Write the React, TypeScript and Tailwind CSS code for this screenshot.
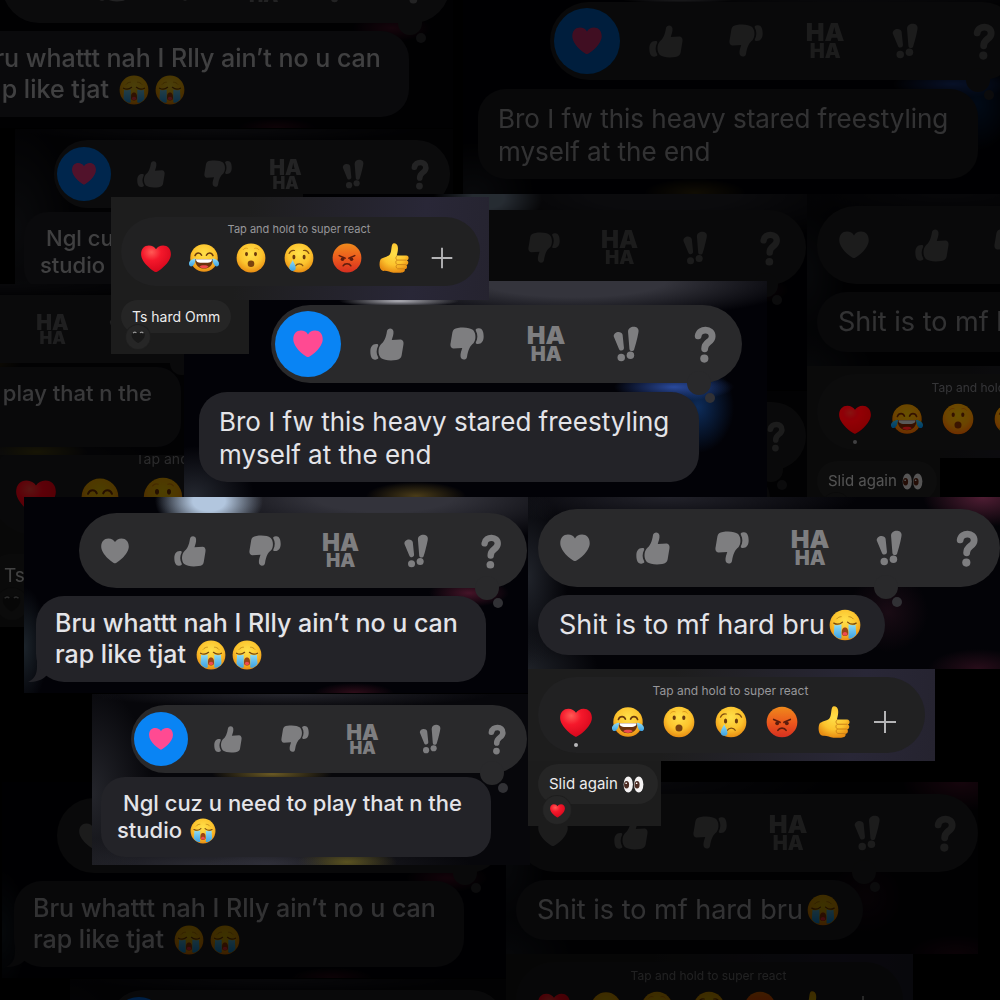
import React from 'react';

type Size = 'sm' | 'md' | 'lg';

const TAPBACK_SIZES: Record<Size, { slot: string; ring: string; ha: string; haSmall: string }> = {
  sm: { slot: 'size-7', ring: '-inset-[13px]', ha: 'text-[21px] leading-[17px]', haSmall: 'text-[17px] leading-[14px]' },
  md: { slot: 'size-8', ring: '-inset-4', ha: 'text-[24px] leading-[20px]', haSmall: 'text-[19px] leading-[16px]' },
  lg: { slot: 'size-[34px]', ring: '-inset-4', ha: 'text-[25px] leading-[21px]', haSmall: 'text-[20px] leading-[17px]' },
};

const HEART = 'M50 91C44 91 4 62 4 35C4 18 14 8 28 8C38 8 46 13 50 20C54 13 62 8 72 8C86 8 96 18 96 35C96 62 56 91 50 91Z';

function Thumb({ down = false }: { down?: boolean }) {
  return (
    <svg viewBox="0 0 100 100" fill="currentColor" className="size-full">
      <g transform={down ? 'rotate(180 50 50)' : undefined}>
        <path d="M31 52C41 45 47 32 50 12C52 1 68 2 69 13C70 22 66 31 64 38L90 37C98 38 100 46 98 54L93 84C92 92 86 96 77 97C57 100 41 97 32 91C23 81 23 62 31 52Z" />
        <path d="M20 50C7 49 1 59 1 72C1 87 6 97 16 96C23 95 26 93 24 89C18 79 18 66 24 55C25 52 23 50 20 50Z" />
      </g>
    </svg>
  );
}

function Exclaim() {
  return (
    <svg viewBox="0 0 100 100" fill="currentColor" className="size-full overflow-visible">
      <path d="M14 28C12 13 37 9 40 23L44 62C44 71 31 72 29 64Z" />
      <path d="M56 14C56 -5 88 -5 87 12C87 20 76 62 74 66C72 73 60 72 60 64Z" />
      <circle cx="36" cy="90" r="11" />
      <circle cx="63" cy="83" r="11" />
    </svg>
  );
}

function Question() {
  return (
    <svg viewBox="0 0 100 100" fill="none" className="size-full overflow-visible">
      <path d="M30 26C33 3 72 3 71 28C70 46 49 43 49 64" stroke="currentColor" strokeWidth="20" strokeLinecap="round" />
      <circle cx="48" cy="93" r="12" fill="currentColor" />
    </svg>
  );
}

function Heart() {
  return (
    <svg viewBox="0 0 100 100" fill="currentColor" className="size-full">
      <path d={HEART} />
    </svg>
  );
}

// shared gradients for every emoji on the page
function EmojiDefs() {
  return (
    <svg className="absolute size-0" aria-hidden="true">
      <defs>
        <radialGradient id="face" cx="50%" cy="35%" r="65%">
          <stop offset="0" stopColor="#ffe04a" />
          <stop offset="0.6" stopColor="#fcc32d" />
          <stop offset="1" stopColor="#e88d13" />
        </radialGradient>
        <linearGradient id="rage" x1="0" y1="0" x2="0" y2="1">
          <stop offset="0" stopColor="#ef8a1c" />
          <stop offset="0.5" stopColor="#ec5a1d" />
          <stop offset="1" stopColor="#d62f20" />
        </linearGradient>
        <radialGradient id="redheart" cx="35%" cy="25%" r="80%">
          <stop offset="0" stopColor="#ff5a55" />
          <stop offset="0.4" stopColor="#f5182b" />
          <stop offset="1" stopColor="#d3061b" />
        </radialGradient>
        <linearGradient id="tear" x1="0" y1="0" x2="0" y2="1">
          <stop offset="0" stopColor="#8fdcf7" />
          <stop offset="1" stopColor="#3da2e2" />
        </linearGradient>
      </defs>
    </svg>
  );
}

type EmojiName = 'love' | 'joy' | 'wow' | 'cry' | 'angry' | 'like' | 'sob' | 'eyes';

const DRAWINGS: Record<EmojiName, React.ReactNode> = {
  love: <path d={HEART} fill="url(#redheart)" transform="translate(-4 0) scale(1.08 1.06)" />,
  joy: (
    <>
      <circle cx="50" cy="50" r="46" fill="url(#face)" />
      <path d="M20 42C25 30 38 31 42 41M58 41C62 31 75 30 80 42" fill="none" stroke="#6b3a0d" strokeWidth="5" strokeLinecap="round" />
      <path d="M20 53H80C79 75 67 85 50 85S21 75 20 53Z" fill="#6a330f" />
      <path d="M23 54H77C76 64 70 66 50 66S24 64 23 54Z" fill="#fff" />
      <path d="M35 79C40 73 60 73 65 79C56 86 44 86 35 79Z" fill="#ee4a4c" />
      <path d="M22 52C18 52 -2 57 0 71C2 83 20 82 22 52ZM78 52C82 52 102 57 100 71C98 83 80 82 78 52Z" fill="url(#tear)" />
    </>
  ),
  wow: (
    <>
      <circle cx="50" cy="50" r="48" fill="url(#face)" />
      <ellipse cx="35" cy="37" rx="5" ry="7" fill="#6b3a0d" />
      <ellipse cx="65" cy="37" rx="5" ry="7" fill="#6b3a0d" />
      <path d="M24 22C28 17 33 16 38 18M62 18C67 16 72 17 76 22" fill="none" stroke="#dc9a1c" strokeWidth="3" strokeLinecap="round" />
      <ellipse cx="50" cy="69" rx="11" ry="11" fill="#7a430f" />
    </>
  ),
  cry: (
    <>
      <circle cx="50" cy="50" r="48" fill="url(#face)" />
      <ellipse cx="33" cy="47" rx="5" ry="8" fill="#6b3a0d" />
      <ellipse cx="67" cy="47" rx="5" ry="8" fill="#6b3a0d" />
      <path d="M17 35C20 28 27 23 35 25M65 25C73 23 80 28 83 35M39 76C43 67 59 67 63 76" fill="none" stroke="#84500f" strokeWidth="4" strokeLinecap="round" />
      <path d="M29 57C26 65 16 75 18 85C21 96 37 96 39 85C40 75 32 66 29 57Z" fill="url(#tear)" />
    </>
  ),
  angry: (
    <>
      <circle cx="50" cy="50" r="48" fill="url(#rage)" />
      <path d="M24 42L44 51M76 42L56 51M37 76C42 67 58 67 63 76" fill="none" stroke="#5d1c0d" strokeWidth="5" strokeLinecap="round" />
      <circle cx="35" cy="54" r="6" fill="#5d1c0d" />
      <circle cx="65" cy="54" r="6" fill="#5d1c0d" />
    </>
  ),
  like: (
    <>
      <path d="M5 55C10 47 29 47 36 38C44 28 39 2 49 1C64 0 67 18 59 42H91C102 43 100 57 93 58C101 61 98 73 91 73C96 77 93 88 86 87C88 95 82 99 72 99H48C36 98 28 92 16 93C1 94 -1 67 5 55Z" fill="url(#face)" />
      <path d="M61 57H92M61 72H90M62 86H85M61 43C54 46 56 55 61 57C54 60 55 69 61 72C55 75 56 83 62 86" fill="none" stroke="#cb8118" strokeWidth="3" />
    </>
  ),
  sob: (
    <>
      <circle cx="50" cy="50" r="48" fill="url(#face)" />
      <path d="M15 44C24 49 34 48 42 41M58 41C66 48 76 49 85 44" fill="none" stroke="#77470f" strokeWidth="4" strokeLinecap="round" />
      <path d="M24 31C28 26 33 24 38 24M76 31C72 26 67 24 62 24" fill="none" stroke="#c08a1a" strokeWidth="3" strokeLinecap="round" />
      <path d="M17 49C26 52 33 51 39 48V92C30 94 19 87 15 79ZM61 48C67 51 74 52 83 49L85 79C81 87 70 94 61 92Z" fill="url(#tear)" />
      <path d="M40 78C39 62 44 58 50 58S61 62 60 78C58 87 42 87 40 78Z" fill="#9a4514" />
      <path d="M42 79C44 70 56 70 58 79C55 85 45 85 42 79Z" fill="#ef4a50" />
    </>
  ),
  eyes: (
    <>
      <ellipse cx="25" cy="50" rx="22" ry="38" fill="#f4f2f2" />
      <ellipse cx="75" cy="50" rx="22" ry="38" fill="#f4f2f2" />
      <ellipse cx="17" cy="51" rx="12" ry="18" fill="#4c2c22" />
      <ellipse cx="67" cy="51" rx="12" ry="18" fill="#4c2c22" />
      <circle cx="15" cy="44" r="4" fill="#fff" />
      <circle cx="65" cy="44" r="4" fill="#fff" />
    </>
  ),
};

function Emoji({ name, className = 'size-full' }: { name: EmojiName; className?: string }) {
  return (
    <svg viewBox="0 0 100 100" role="img" aria-label={name} className={`${className} overflow-visible`}>
      {DRAWINGS[name]}
    </svg>
  );
}

interface TapbackBarProps {
  size: Size;
  loved?: boolean;
  className: string;
  tail: string;
}

function TapbackBar({ size, loved = false, className, tail }: TapbackBarProps) {
  const s = TAPBACK_SIZES[size];
  return (
    <div className={`relative flex items-center justify-between rounded-full bg-[#29292b] text-[#7e7e80] ${className}`}>
      <button aria-label="Love" className={`relative ${s.slot} ${loved ? 'text-[#ff4a92]' : ''}`}>
        {loved && <span className={`absolute rounded-full bg-[#0984f4] ${s.ring}`} />}
        <span className="relative block size-full p-px">
          <Heart />
        </span>
      </button>
      <button aria-label="Like" className={s.slot}><Thumb /></button>
      <button aria-label="Dislike" className={s.slot}><Thumb down /></button>
      <button className={`flex flex-col items-center justify-center font-black ${s.slot}`}>
        <span className={s.ha}>HA</span>
        <span className={s.haSmall}>HA</span>
      </button>
      <button aria-label="Emphasize" className={s.slot}><Exclaim /></button>
      <button aria-label="Question" className={s.slot}><Question /></button>
      <span className={`absolute -bottom-3 size-6 rounded-full bg-[#29292b] ${tail}`}>
        <span className="absolute left-[18px] top-[22px] size-[10px] rounded-full bg-[#313135]" />
      </span>
    </div>
  );
}

const BUBBLE = 'relative whitespace-nowrap bg-[#232328] text-[#e4e4e8]';

function BroCard() {
  return (
    <article className="absolute left-[184px] top-[281px] h-[216px] w-[583px] bg-[#020207] bg-[radial-gradient(60px_6px_at_215px_20px,#b0b0b8,transparent),radial-gradient(230px_40px_at_390px_0px,#34343c_40%,transparent),radial-gradient(60px_14px_at_490px_106px,#2a4a9c,transparent),radial-gradient(36px_46px_at_514px_126px,#0d2c5a,transparent),radial-gradient(50px_14px_at_232px_215px,#4a3c18,transparent),radial-gradient(60px_50px_at_10px_215px,#24272f,transparent)] pl-[15px] pt-6">
      <TapbackBar size="lg" loved className="ml-[72px] h-[78px] w-[471px] px-5" tail="right-[31px]" />
      <p className={`${BUBBLE} mt-[9px] h-[90px] w-[500px] rounded-[28px] px-5 pt-[13px] text-[26px] leading-[33px]`}>
        Bro I fw this heavy stared freestyling<br />myself at the end
      </p>
    </article>
  );
}

function BruCard() {
  return (
    <article className="absolute left-6 top-[497px] h-[196px] w-[506px] bg-[#020207] bg-[radial-gradient(54px_34px_at_185px_4px,#b2c6de_30%,transparent),radial-gradient(230px_50px_at_360px_0px,#33333b_30%,transparent),radial-gradient(40px_14px_at_445px_96px,#451428,transparent),radial-gradient(40px_10px_at_330px_196px,#300d1a,transparent),radial-gradient(24px_60px_at_0px_150px,#1c242b,transparent)] pl-3 pt-4">
      <TapbackBar size="md" className="ml-[43px] h-[75px] w-[448px] px-5" tail="right-[28px]" />
      <div className="relative mt-2">
        <svg viewBox="0 0 30 24" className="absolute -left-2 bottom-0 h-6 w-[30px]">
          <path d="M9 0V8C9 17 6 21 0 24C8 24 14 22 18 18L30 12Z" fill="#232328" />
        </svg>
        <p className={`${BUBBLE} h-[86px] w-[450px] rounded-[28px] pl-[19px] pt-3 text-[25px] font-medium leading-[31px]`}>
          Bru whattt nah I Rlly ain’t no u can
          <span className="flex items-center gap-[6px]">
            rap like tjat <Emoji name="sob" className="ml-1 size-[30px]" />
            <Emoji name="sob" className="size-[30px]" />
          </span>
        </p>
      </div>
    </article>
  );
}

function ShitCard() {
  return (
    <article className="absolute left-[528px] top-[497px] h-[172px] w-[472px] bg-[#030307] bg-[radial-gradient(60px_30px_at_455px_0px,#4f1d33,transparent),radial-gradient(190px_30px_at_140px_0px,#22222a,transparent),radial-gradient(40px_90px_at_0px_80px,#20232a,transparent),radial-gradient(40px_40px_at_360px_115px,#190b14,transparent),radial-gradient(50px_20px_at_450px_172px,#280d1a,transparent),radial-gradient(70px_40px_at_0px_172px,#1e2127,transparent)] pl-[10px] pt-3">
      <TapbackBar size="lg" className="h-[78px] w-[462px] pl-5 pr-4" tail="right-[102px]" />
      <p className={`${BUBBLE} mt-2 flex h-[60px] w-[347px] items-center gap-1 rounded-[30px] pl-[21px] text-[27px] leading-[32px]`}>
        Shit is to mf hard bru <Emoji name="sob" className="size-8" />
      </p>
    </article>
  );
}

function NglCard({ place = 'left-[92px] top-[694px]' }: { place?: string }) {
  return (
    <article className={`absolute h-[171px] w-[438px] bg-[#07070b] bg-[radial-gradient(60px_10px_at_180px_80px,#6b5a24,transparent),radial-gradient(60px_14px_at_175px_171px,#30303a,transparent),radial-gradient(50px_14px_at_255px_168px,#5a5220,transparent),radial-gradient(60px_110px_at_0px_100px,#24252b,transparent),radial-gradient(200px_14px_at_200px_0px,#24242b,transparent),radial-gradient(260px_30px_at_120px_171px,#2c2c34,transparent)] pl-[9px] pt-[11px] ${place}`}>
      <TapbackBar size="sm" loved className="ml-[30px] h-[68px] w-[396px] px-4" tail="right-[23px]" />
      <p className={`${BUBBLE} mt-1 h-20 w-[390px] rounded-[24px] pl-4 pt-[13px] text-[22px] font-medium leading-[27px]`}>
        <span className="pl-[6px]">Ngl cuz u need to play that n the</span>
        <span className="flex items-center gap-2">
          studio <Emoji name="sob" className="size-[26px]" />
        </span>
      </p>
    </article>
  );
}

const QUICK_REACTIONS: EmojiName[] = ['love', 'joy', 'wow', 'cry', 'angry', 'like'];

interface MessengerCardProps {
  place: string;
  top: string;
  bar: string;
  hint: string;
  slot: string;
  bottom: string;
  bubble: string;
  badge: string;
  selected?: boolean;
  badgeIcon: React.ReactNode;
  children: React.ReactNode;
}

function MessengerCard({ place, top, bar, hint, slot, bottom, bubble, badge, selected, badgeIcon, children }: MessengerCardProps) {
  return (
    <article className={`absolute ${place}`}>
      <div className={`bg-[#1f1f21] bg-[linear-gradient(100deg,#1d1d1d_35%,#292737_80%,#25232f)] ${top}`}>
        <div className={`flex flex-col rounded-full bg-[#212122] ${bar}`}>
          <p className={`whitespace-nowrap text-center text-[#97979a] ${hint}`}>Tap and hold to super react</p>
          <div className="flex items-center justify-between">
            {QUICK_REACTIONS.map((name, i) => (
              <button key={name} aria-label={name} className={`relative ${slot}`}>
                <Emoji name={name} />
                {selected && i === 0 && (
                  <span className="absolute -bottom-[9px] left-[14px] size-1 rounded-full bg-[#b8b8ba]" />
                )}
              </button>
            ))}
            <button aria-label="More reactions" className={`text-[#b4b4b6] ${slot}`}>
              <svg viewBox="0 0 32 32" className="size-full">
                <path d="M16 5V27M5 16H27" stroke="currentColor" strokeWidth="2" />
              </svg>
            </button>
          </div>
        </div>
      </div>
      <div className={`relative bg-[#1c1c1c] ${bottom}`}>
        <p className={`flex items-center whitespace-nowrap rounded-full bg-[#252525] text-[#ececec] ${bubble}`}>{children}</p>
        <span className={`absolute flex items-center justify-center rounded-full bg-[#262626] ring-1 ring-[#1e1e1e] ${badge}`}>{badgeIcon}</span>
      </div>
    </article>
  );
}

function DarkHeart() {
  return (
    <svg viewBox="0 0 100 100" className="size-3/5">
      <path d={HEART} fill="#191919" />
      <path d="M14 22Q25 10 38 20M62 20Q75 10 86 22" fill="none" stroke="#999" strokeWidth="8" />
    </svg>
  );
}

function SlidCard() {
  return (
    <MessengerCard
      place="left-[528px] top-[669px]"
      top="h-[92px] w-[407px] pl-[10px] pt-2"
      bar="h-[76px] w-[387px] pl-[22px] pr-6 pt-[6px]"
      hint="mb-[7px] text-[12px] leading-4"
      slot="size-8"
      bottom="h-[65px] w-[133px] pl-[10px] pt-[3px]"
      bubble="h-10 w-[120px] gap-[5px] pl-[11px] text-[15px]"
      badge="left-[15px] top-[35px] size-7"
      selected
      badgeIcon={<Emoji name="love" className="size-[15px]" />}
    >
      Slid again <Emoji name="eyes" className="size-[21px]" />
    </MessengerCard>
  );
}

function TsCard() {
  return (
    <MessengerCard
      place="left-[111px] top-[197px]"
      top="h-[103px] w-[378px] pl-[10px] pt-5"
      bar="h-[69px] w-[359px] pl-5 pr-[23px] pt-1"
      hint="mb-[6px] text-[11px] leading-4"
      slot="size-[30px]"
      bottom="h-[54px] w-[138px] pl-[10px]"
      bubble="h-[33px] w-[110px] pl-[11px] text-[14px]"
      badge="left-[15px] top-[25px] size-6"
      badgeIcon={<DarkHeart />}
    >
      Ts hard Omm
    </MessengerCard>
  );
}

// zoomed-in copy that sits in the backdrop at the left edge
function TsCardLarge() {
  return (
    <MessengerCard
      place="-left-6 top-[416px]"
      top="h-[138px] w-[506px] pl-[13px] pt-[27px]"
      bar="h-[92px] w-[480px] pl-[27px] pr-8 pt-[6px]"
      hint="mb-2 text-[14px] leading-5"
      slot="size-10"
      bottom="h-[73px] w-[185px] pl-[13px]"
      bubble="h-11 w-[148px] pl-[15px] text-[19px]"
      badge="left-5 top-[34px] size-8"
      badgeIcon={<DarkHeart />}
    >
      Ts hard Omm
    </MessengerCard>
  );
}

function Backdrop() {
  return (
    <div aria-hidden="true" className="absolute inset-0">
      <div className="absolute -left-[77px] -top-[565px] brightness-28 saturate-125">
        <BruCard />
        <NglCard />
      </div>
      <div className="absolute left-0 top-0 brightness-28 saturate-150">
        <TsCardLarge />
      </div>
      <div className="absolute left-0 top-0 brightness-25 saturate-125">
        <NglCard place="-left-[218px] top-[284px]" />
      </div>
      <div className="absolute left-[279px] -top-[303px] brightness-22 saturate-125">
        <BruCard />
        <NglCard />
        <BroCard />
        <ShitCard />
      </div>
      <div className="absolute left-[279px] -top-[303px] brightness-35 saturate-200">
        <SlidCard />
      </div>
      <div className="absolute -left-[22px] top-[285px] brightness-22 saturate-150">
        <BruCard />
        <NglCard />
        <ShitCard />
        <SlidCard />
      </div>
    </div>
  );
}

export default function App() {
  return (
    <main className="relative min-h-screen w-full overflow-hidden bg-black font-['Inter',sans-serif]">
      <EmojiDefs />
      <Backdrop />
      <BroCard />
      <BruCard />
      <NglCard />
      <ShitCard />
      <SlidCard />
      <TsCard />
    </main>
  );
}
